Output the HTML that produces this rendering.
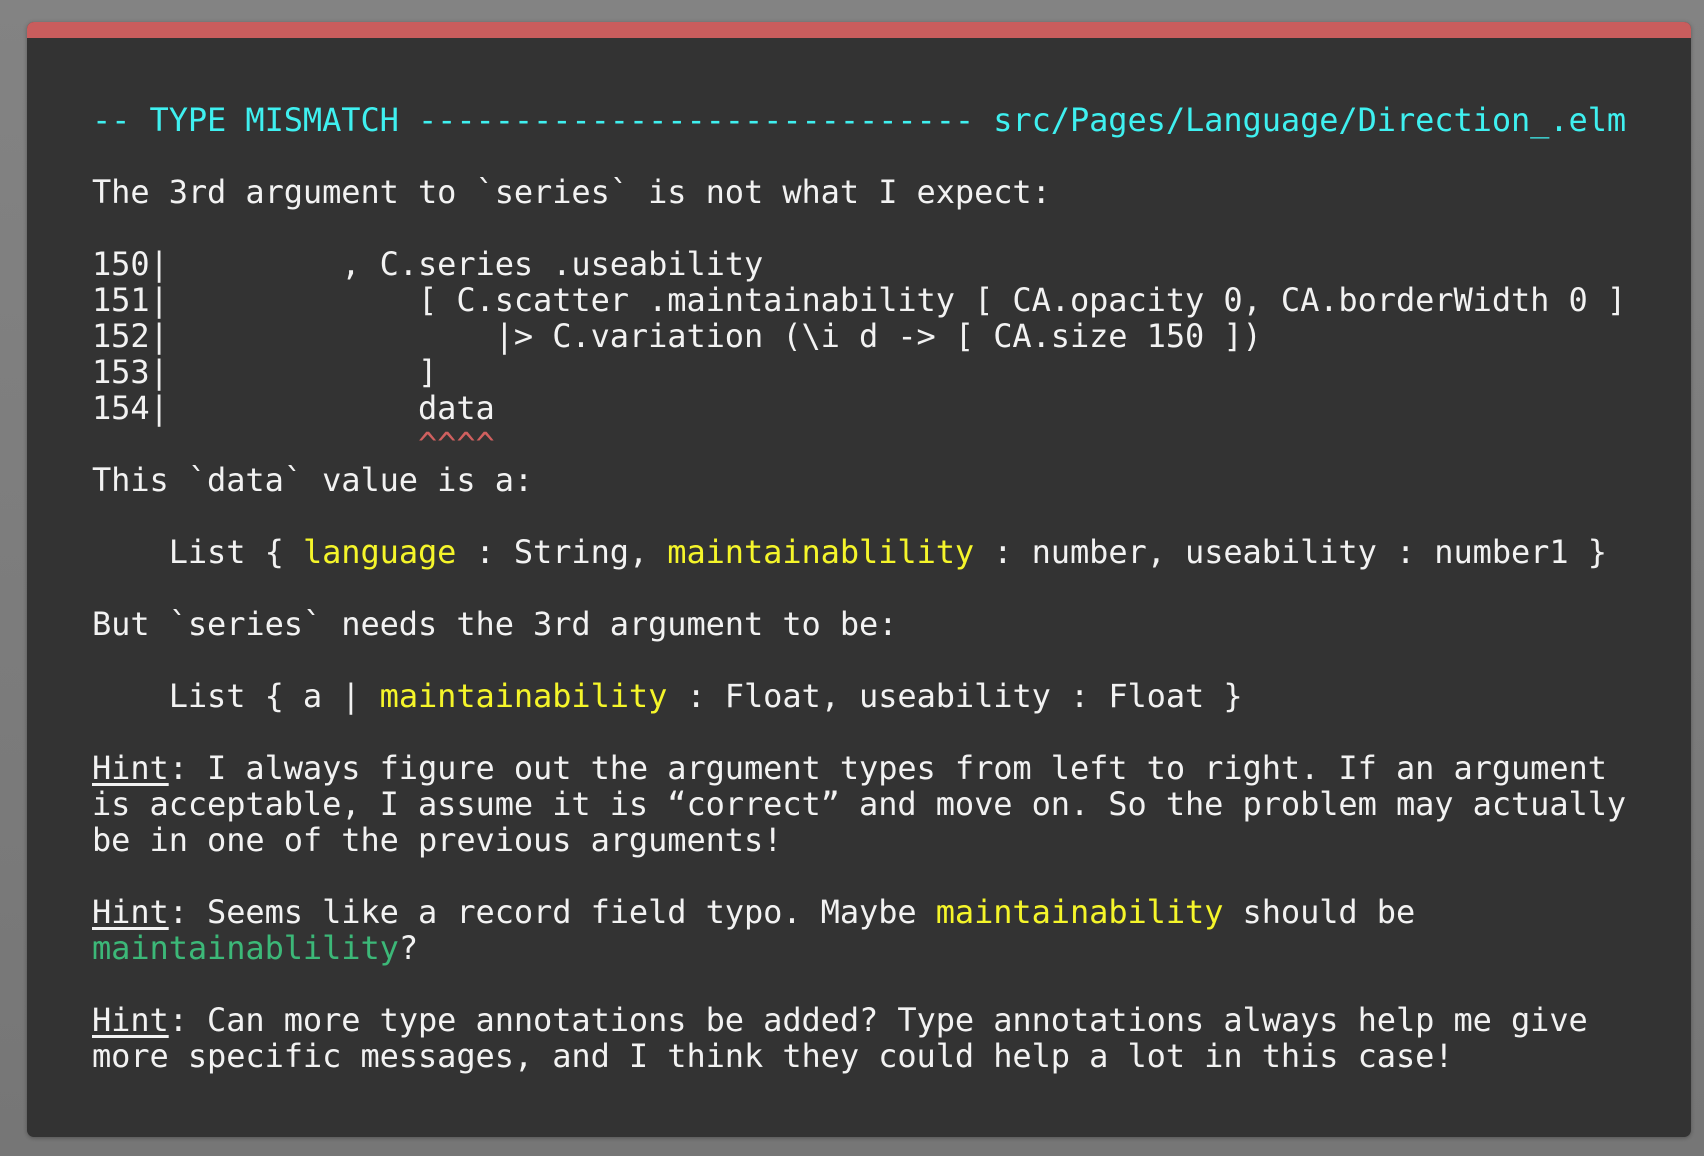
<!DOCTYPE html>
<html><head><meta charset="utf-8"><style>
html,body{margin:0;padding:0}
body{width:1704px;height:1156px;background:linear-gradient(#838383,#767676);position:relative;overflow:hidden}
.box{position:absolute;left:27px;top:22px;width:1664px;height:1115px;background:#333333;border-radius:7px;overflow:hidden;box-shadow:0 1px 4px rgba(0,0,0,.3)}
.bar{height:16px;background:#c95d5d}
pre{margin:0;position:absolute;left:65px;top:80px;font-family:"DejaVu Sans Mono","Liberation Mono",monospace;font-size:32px;line-height:36px;letter-spacing:-0.09px;color:#f2f2f2;white-space:pre}
.c{color:#3ff0f0}.y{color:#f5f52a}.g{color:#3cb878}.r{color:#d0605f}.u{text-decoration:underline;text-underline-offset:4px}
</style></head><body><div class="box"><div class="bar"></div>
<pre><span class="c">-- TYPE MISMATCH ----------------------------- src/Pages/Language/Direction_.elm</span>

The 3rd argument to `series` is not what I expect:

150|         , C.series .useability
151|             [ C.scatter .maintainability [ CA.opacity 0, CA.borderWidth 0 ]
152|                 |&gt; C.variation (\i d -&gt; [ CA.size 150 ])
153|             ]
154|             data
                 <span class="r">^^^^</span>
This `data` value is a:

    List { <span class="y">language</span> : String, <span class="y">maintainablility</span> : number, useability : number1 }

But `series` needs the 3rd argument to be:

    List { a | <span class="y">maintainability</span> : Float, useability : Float }

<span class="u">Hint</span>: I always figure out the argument types from left to right. If an argument
is acceptable, I assume it is “correct” and move on. So the problem may actually
be in one of the previous arguments!

<span class="u">Hint</span>: Seems like a record field typo. Maybe <span class="y">maintainability</span> should be
<span class="g">maintainablility</span>?

<span class="u">Hint</span>: Can more type annotations be added? Type annotations always help me give
more specific messages, and I think they could help a lot in this case!</pre>
</div></body></html>
